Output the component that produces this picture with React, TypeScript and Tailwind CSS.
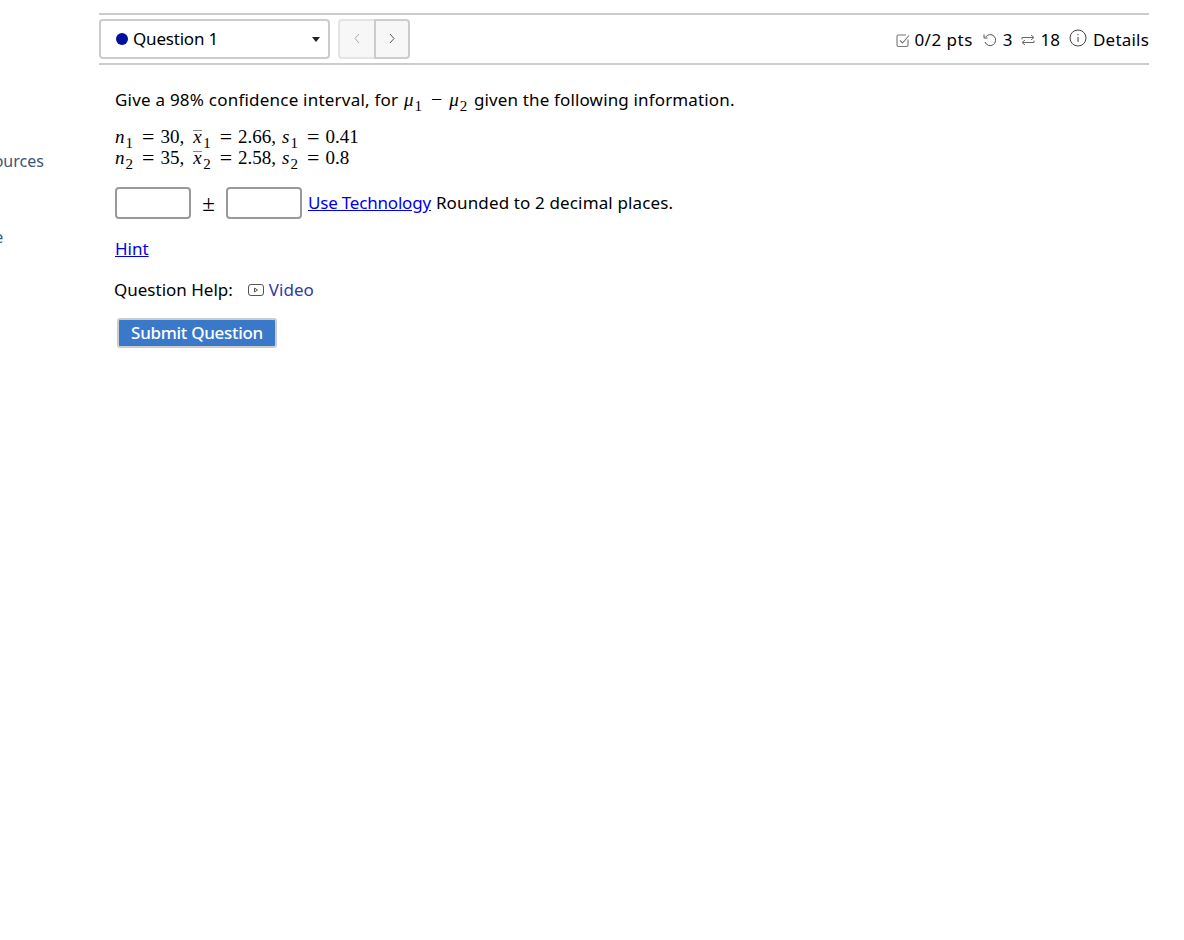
import React from 'react';

const uiFont = 'font-["Noto_Sans","Open_Sans",sans-serif]';

function Sub({ children }: { children: React.ReactNode }) {
  return <span className="inline-block ml-[1px] align-[-5px] text-[15px] leading-none not-italic">{children}</span>;
}

function Rel({ children }: { children: React.ReactNode }) {
  return <span className="inline-block ml-[9px] mr-[6px] text-[22px] leading-[15px] align-[-1px]">{children}</span>;
}

function XBar() {
  return <span className="italic border-t border-[#888] leading-[11px] inline-block h-[11px] w-[9px] ml-[9px]">x</span>;
}

function Sidebar() {
  return (
    <aside className="w-[99px] shrink-0 overflow-hidden pt-[149px] text-[16px] leading-[24px] text-[#3b5478]">
      <div className="-ml-[33px] whitespace-nowrap">Resources</div>
      <div className="-ml-[84px] mt-[52px] whitespace-nowrap">Home page</div>
    </aside>
  );
}

function Toolbar() {
  return (
    <div className="w-[1050px] h-[52px] border-y-2 border-[#cccccc] flex items-center justify-between">
      <div className="flex items-center gap-[8px]">
        <div className="w-[231px] h-[40px] rounded-[4px] border-2 border-[#cccccc] flex items-center pl-[15px] pr-[8px]">
          <span className="w-[12px] h-[12px] rounded-full bg-[#00109c] mr-[5px]" />
          <span className="text-[17px] tracking-[-0.2px] flex-1">Question 1</span>
          <svg width="8" height="5" viewBox="0 0 8 5" fill="#222"><path d="M0 0h8L4 5z" /></svg>
        </div>
        <div className="flex h-[40px] w-[72px]">
          <button className="w-[36px] flex items-center justify-center pb-[2px] bg-[#f7f7f7] rounded-l-[4px] border-2 border-r-0 border-[#e4e4e4]">
            <svg width="8" height="11" viewBox="0 0 8 11" fill="none" stroke="#aaa"><path d="M6 1 2 5.500 6 10" /></svg>
          </button>
          <button className="flex-1 flex items-center justify-center pb-[2px] bg-[#f7f7f7] rounded-r-[4px] border-2 border-[#cccccc]">
            <svg width="8" height="11" viewBox="0 0 8 11" fill="none" stroke="#555"><path d="M2 1l4 4.500L2 10" /></svg>
          </button>
        </div>
      </div>
      <div className="flex items-center text-[17px] mt-[1px]">
        <svg width="16" height="16" viewBox="0 0 16 16" fill="none" stroke="#777" strokeWidth="1.100" className="mr-[3px]">
          <path d="M13 7.500V13a1.500 1.500 0 0 1-1.500 1.500h-8A1.500 1.500 0 0 1 2 13V4.500A1.500 1.500 0 0 1 3.500 3H11" />
          <path d="M5 8.500l2.500 2.500L14 3.500" />
        </svg>
        <span className="tracking-[0.5px]">0/2 pts</span>
        <svg width="16" height="16" viewBox="0 0 16 16" fill="none" stroke="#555" className="ml-[9px] mr-[5px]">
          <path d="M3.500 5.200A5.500 5.500 0 1 1 3 10" />
          <path d="M2 2.500v3.500h3.500" />
        </svg>
        <span>3</span>
        <svg width="16" height="16" viewBox="0 0 16 16" fill="none" stroke="#666" className="ml-[7px] mr-[5px]">
          <path d="M2 7.500V5.500h11M11 3l3 2.500-3 2.500" />
          <path d="M14 8.500v2H3M5 8l-3 2.500L5 13" />
        </svg>
        <span>18</span>
        <svg width="18" height="18" viewBox="0 0 18 18" fill="none" stroke="#444" className="ml-[9px] mr-[6px] -mt-[4px]">
          <circle cx="9" cy="9" r="8" />
          <path d="M9 8v5M9 5v1.200" />
        </svg>
        <span className="tracking-[0.2px]">Details</span>
      </div>
    </div>
  );
}

function Question() {
  return (
    <div className="pl-[16px] text-[17px] text-black">
      <p className="mt-[21px] leading-[28px] h-[28px] tracking-[0.22px] whitespace-nowrap">
        Give a 98% confidence interval, for{' '}
        <span className="font-['Liberation_Serif',serif] text-[19px] tracking-normal">
          <i className="ml-[1px]">μ</i><Sub>1</Sub>
          <span className="inline-block ml-[9px] mr-[7px] text-[20px] leading-none">−</span>
          <i>μ</i><Sub>2</Sub>
        </span>
        <span className="ml-[2px] tracking-[0.15px]"> given the following information.</span>
      </p>
      <div className="mt-[12px] font-['Liberation_Serif',serif] text-[19px] leading-[21px] whitespace-nowrap">
        <div className="h-[21px]">
          <i>n</i><Sub>1</Sub><Rel>=</Rel>30,<XBar /><Sub>1</Sub><Rel>=</Rel>2.66,
          <i className="ml-[6px]">s</i><Sub>1</Sub><Rel>=</Rel>0.41
        </div>
        <div className="h-[21px]">
          <i>n</i><Sub>2</Sub><Rel>=</Rel>35,<XBar /><Sub>2</Sub><Rel>=</Rel>2.58,
          <i className="ml-[6px]">s</i><Sub>2</Sub><Rel>=</Rel>0.8
        </div>
      </div>
      <div className="mt-[19px] flex items-center h-[32px]">
        <input className="w-[76px] h-[32px] rounded-[4px] border-2 border-[#999999] bg-white" />
        <span className="w-[35px] text-center font-['Liberation_Serif',serif] text-[23px] leading-none">±</span>
        <input className="w-[76px] h-[32px] rounded-[4px] border-2 border-[#999999] bg-white" />
        <a className="ml-[6px] text-[#0000ee] underline tracking-[-0.2px]" href="#">Use Technology</a>
        <span className="ml-[5px] tracking-[0.14px]">Rounded to 2 decimal places.</span>
      </div>
      <div className="mt-[16px] leading-[28px]">
        <a className="text-[#0000ee] underline" href="#">Hint</a>
      </div>
      <div className="mt-[13px] -ml-[1px] flex items-center leading-[28px]">
        <span>Question Help:</span>
        <svg width="16" height="12" viewBox="0 0 16 12" fill="none" stroke="#555" className="ml-[15px] mr-[5px]">
          <rect x="0.500" y="0.500" width="15" height="11" rx="2.500" />
          <path d="M6.500 4v4l3-2z" />
        </svg>
        <a className="text-[#2f3aa5]" href="#">Video</a>
      </div>
      <button className="mt-[14px] ml-[2px] block w-[160px] h-[30px] pb-[2px] rounded-[3px] border-2 border-[#cccccc] bg-[#3a78c9] text-white text-[17px] font-medium tracking-[-0.3px] leading-none">
        Submit Question
      </button>
    </div>
  );
}

export default function App(): React.JSX.Element {
  return (
    <div className={`${uiFont} flex min-h-[940px] bg-white text-black`}>
      <Sidebar />
      <main className="pt-[13px] flex-1">
        <Toolbar />
        <Question />
      </main>
    </div>
  );
}
